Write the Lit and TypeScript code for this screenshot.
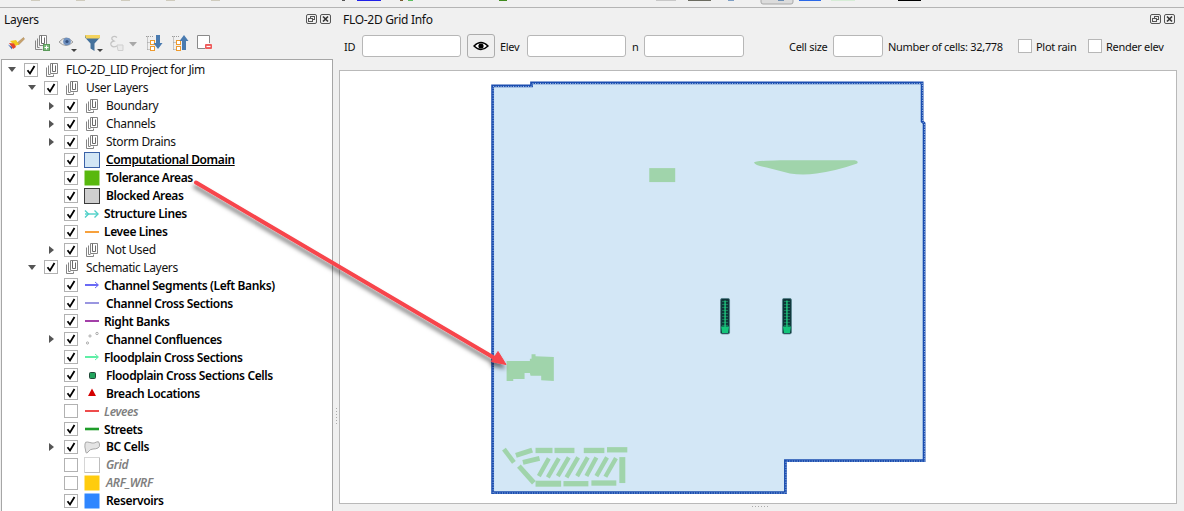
import { LitElement, html, svg, css, nothing } from "lit";
import { customElement } from "lit/decorators.js";

type Row = {
  label: string;
  depth: number;
  icon: string;
  exp?: "open" | "closed";
  off?: boolean;
  style?: "bold" | "link" | "dim";
  tight?: boolean;
};

const ROWS: Row[] = [
  { label: "FLO-2D_LID Project for Jim", depth: 0, icon: "group", exp: "open" },
  { label: "User Layers", depth: 1, icon: "group", exp: "open" },
  { label: "Boundary", depth: 2, icon: "group", exp: "closed" },
  { label: "Channels", depth: 2, icon: "group", exp: "closed" },
  { label: "Storm Drains", depth: 2, icon: "group", exp: "closed" },
  { label: "Computational Domain", depth: 2, icon: "domain", style: "link" },
  { label: "Tolerance Areas", depth: 2, icon: "tolerance", style: "bold" },
  { label: "Blocked Areas", depth: 2, icon: "blocked", style: "bold" },
  { label: "Structure Lines", depth: 2, icon: "structure", style: "bold", tight: true },
  { label: "Levee Lines", depth: 2, icon: "leveeLine", style: "bold", tight: true },
  { label: "Not Used", depth: 2, icon: "group", exp: "closed" },
  { label: "Schematic Layers", depth: 1, icon: "group", exp: "open" },
  { label: "Channel Segments (Left Banks)", depth: 2, icon: "segments", style: "bold", tight: true },
  { label: "Channel Cross Sections", depth: 2, icon: "xsec", style: "bold" },
  { label: "Right Banks", depth: 2, icon: "banks", style: "bold", tight: true },
  { label: "Channel Confluences", depth: 2, icon: "confluence", style: "bold", exp: "closed" },
  { label: "Floodplain Cross Sections", depth: 2, icon: "floodplain", style: "bold", tight: true },
  { label: "Floodplain Cross Sections Cells", depth: 2, icon: "cells", style: "bold" },
  { label: "Breach Locations", depth: 2, icon: "breach", style: "bold" },
  { label: "Levees", depth: 2, icon: "levees", style: "dim", off: true, tight: true },
  { label: "Streets", depth: 2, icon: "streets", style: "bold", tight: true },
  { label: "BC Cells", depth: 2, icon: "bc", style: "bold", exp: "closed" },
  { label: "Grid", depth: 2, icon: "grid", style: "dim", off: true },
  { label: "ARF_WRF", depth: 2, icon: "arf", style: "dim", off: true },
  { label: "Reservoirs", depth: 2, icon: "reservoirs", style: "bold" },
  { label: "", depth: 2, icon: "next" },
];

const line = (color: string, w = 2) =>
  html`<svg width="16" height="16" viewBox="0 0 16 16"><path d="M1 8H15" stroke=${color} stroke-width=${w} /></svg>`;
const arrowLine = (color: string) =>
  html`<svg width="16" height="16" viewBox="0 0 16 16" fill="none" stroke=${color} stroke-width="2"><path d="M1 8H14" /><path d="M11 5l3.5 3-3.5 3" stroke-width="1" /></svg>`;
const swatch = (fill: string, stroke = "none") =>
  html`<svg width="16" height="16" viewBox="0 0 16 16"><rect x=".5" y=".5" width="15" height="15" fill=${fill} stroke=${stroke} /></svg>`;

// the little stacked-documents icon QGIS uses for layer groups
const groupIcon = html`<svg width="16" height="16" viewBox="0 0 16 16" fill="none" stroke="#858585" stroke-width="1">
  <path d="M2.5 5.5V14.5H9.5V12.5" />
  <path d="M4.5 3.5V12.5H6.5" />
  <path d="M6.5 1.5H13.5V11.5H6.5Z" fill="#fff" />
  <path d="M8.5 1.5V9.5H11.5V3.5" stroke="#6a6a6a" />
</svg>`;

const ICONS: Record<string, unknown> = {
  group: groupIcon,
  domain: swatch("#d2e6f5", "#3a62a8"),
  tolerance: swatch("#58b80e"),
  blocked: swatch("#cfcfcf", "#3c3c3c"),
  structure: html`<svg width="16" height="16" viewBox="0 0 16 16" fill="none" stroke="#4fd0c8" stroke-width="1.4"><path d="M1 8H14" /><path d="M1 4.5L4.5 8 1 11.5M10.5 4.5L14 8l-3.5 3.5" /></svg>`,
  leveeLine: line("#f7a13c"),
  segments: arrowLine("#6a6af5"),
  xsec: line("#9a96e0"),
  banks: line("#a33fa8"),
  confluence: html`<svg width="16" height="16" viewBox="0 0 16 16" fill="#fff" stroke="#999" stroke-width=".8"><circle cx="13" cy="2.5" r="1.2" /><circle cx="6" cy="5" r="1.1" /><circle cx="3.5" cy="12" r="1.1" /></svg>`,
  floodplain: arrowLine("#5fefa6"),
  cells: html`<svg width="16" height="16" viewBox="0 0 16 16"><rect x="5.5" y="5.5" width="6" height="6" rx="1" fill="#22a35c" stroke="#24483a" /></svg>`,
  breach: html`<svg width="16" height="16" viewBox="0 0 16 16"><path d="M8 3.5L12 11H4Z" fill="#d40000" /></svg>`,
  levees: line("#ee4c4c"),
  streets: line("#1f9d2a", 2.6),
  bc: html`<svg width="16" height="16" viewBox="0 0 16 16"><path d="M1 5Q1 2.5 3.5 3T8 4T12.5 3T15.5 5Q16 8 14 9T9 10T4 13T1.5 11Q.5 8 1 5Z" fill="#e4e4e4" stroke="#a8a8a8" /></svg>`,
  grid: html`<svg width="16" height="16" viewBox="0 0 16 16"><rect x=".5" y=".5" width="15" height="15" fill="#fff" stroke="#d6d6d6" /><path d="M1 15.5H16M15.5 1V16" stroke="#bdbdbd" /></svg>`,
  arf: swatch("#ffcc0e"),
  reservoirs: swatch("#2f86ff"),
  next: html`<svg width="16" height="16" viewBox="0 0 16 16"><rect x="0" y="0" width="16" height="16" fill="#3aa83a" /></svg>`,
};

const dropdown = svg`<path d="M13 15h6l-3 3z" fill="#444" />`;

const TOOLS = [
  html`<svg width="18" height="18" viewBox="0 0 18 18">
    <path d="M10 9L16.5 3.5L17.5 5L11.5 11Z" fill="#c9a26a" stroke="#9c7a48" stroke-width=".5" />
    <path d="M3 7L9 6L12 10.5L8 12Z" fill="#f2c81e" />
    <path d="M2 9L7 9.5L9 13L6 15Z" fill="#e2452f" />
    <path d="M1 10.5L5 13L5 15.5Z" fill="#3a63b8" />
  </svg>`,
  html`<svg width="18" height="18" viewBox="0 0 18 18" fill="none" stroke="#858585">
    <path d="M2.5 6.5V15.5H9.5" />
    <path d="M4.5 4.5V13.5H6.5" />
    <path d="M6.5 1.5H13.5V11.5H6.5Z" fill="#fff" />
    <path d="M8.5 1.5V9.5H11.5V3.5" stroke="#6a6a6a" />
    <rect x="10.5" y="10.5" width="6" height="6" fill="#7bb87b" stroke="#5a9a5a" />
    <path d="M13.5 11.5v4M11.5 13.5h4" stroke="#fff" />
  </svg>`,
  html`<svg width="20" height="18" viewBox="0 0 20 18">
    <path d="M1 8Q8 0 15 8Q8 15 1 8Z" fill="#e9e9e9" stroke="#9d9d9d" />
    <circle cx="9" cy="7.5" r="3.8" fill="#6d8fbe" />
    <circle cx="9" cy="7.5" r="1.6" fill="#34507c" />
    ${dropdown}
  </svg>`,
  html`<svg width="20" height="18" viewBox="0 0 20 18">
    <path d="M1 1H16V3.5L10.5 9.5V17L6.5 14.5V9.5L1 3.5Z" fill="#44719c" />
    <path d="M1 1H16V3.5L15 4.6H2Z" fill="#f4d35e" />
    ${dropdown}
  </svg>`,
  html`<svg width="29" height="18" viewBox="0 0 29 18">
    <path d="M8 3.5Q5.5 1.5 3.5 3Q1.5 5 5 7Q1 8 2 11Q3.5 14 8 12" fill="none" stroke="#c4c4c4" stroke-width="1.3" />
    <path d="M8 11H14V16.5H9Z" fill="#eaeaea" stroke="#cfcfcf" />
    <path d="M20 8h8l-4 4.5z" fill="#a8a8a8" />
  </svg>`,
  html`<svg width="18" height="18" viewBox="0 0 18 18">
    <path d="M1 2.5H8M2.5 2.5V15.5M2.5 8.5H6M2.5 15.5H6" stroke="#9a9a9a" stroke-dasharray="1 1" fill="none" />
    <rect x="5.5" y="6.5" width="4" height="4" fill="#fff" stroke="#ee9a2e" />
    <rect x="5.5" y="12.5" width="4" height="4" fill="#fff" stroke="#ee9a2e" />
    <path d="M11 1H15V9H17.5L13 15L8.5 9H11Z" fill="#4a7bb0" />
  </svg>`,
  html`<svg width="18" height="18" viewBox="0 0 18 18">
    <path d="M1 2.5H8M2.5 2.5V15.5M2.5 8.5H6M2.5 15.5H6" stroke="#9a9a9a" stroke-dasharray="1 1" fill="none" />
    <rect x="5.5" y="6.5" width="4" height="4" fill="#fff" stroke="#ee9a2e" />
    <rect x="5.5" y="12.5" width="4" height="4" fill="#fff" stroke="#ee9a2e" />
    <path d="M11 16V7H8.5L13 1L17.5 7H15V16Z" fill="#4a7bb0" />
  </svg>`,
  html`<svg width="18" height="18" viewBox="0 0 18 18">
    <path d="M9 14.5H1.5V1.5H13.5V9" fill="#fff" stroke="#8a8a8a" />
    <rect x="9" y="10" width="7" height="5" rx="1" fill="#ee5a5a" />
    <path d="M10.5 12.5h4" stroke="#fff" stroke-width="1.2" />
  </svg>`,
];

const dockButtons = html`<div class="dock-btns">
  <svg width="11" height="10" viewBox="0 0 11 10" fill="none" stroke="#555">
    <rect x=".5" y=".5" width="10" height="9" rx="1.5" />
    <rect x="4.5" y="2.5" width="4" height="3" />
    <rect x="2.5" y="4.5" width="4" height="3" fill="#f0f0f0" />
  </svg>
  <svg width="11" height="10" viewBox="0 0 11 10" fill="none">
    <rect x=".5" y=".5" width="10" height="9" rx="1.5" stroke="#555" />
    <path d="M3 2.5L8 7.5M8 2.5L3 7.5" stroke="#333" stroke-width="1.6" />
  </svg>
</div>`;

// map shapes are written in 3x crop coordinates, the group transform brings them back
const LOWER_BLOCKS: [number, number, number, number, number][] = [
  [70, 327, 100, 367, 14], [106, 346, 155, 330, 15], [127, 367, 177, 355, 15], [115, 378, 160, 428, 15],
  [165, 331, 216, 331, 16], [222, 331, 282, 331, 16], [310, 331, 372, 331, 16], [380, 329, 441, 329, 16],
  [426, 351, 426, 429, 18], [165, 431, 242, 431, 18], [249, 431, 324, 431, 16], [333, 429, 408, 429, 16],
  [205, 355, 175, 408, 13], [235, 355, 202, 412, 13], [265, 352, 232, 408, 13], [293, 352, 258, 412, 13],
  [322, 352, 290, 408, 13], [348, 352, 318, 408, 13], [380, 352, 348, 408, 13], [407, 354, 375, 410, 13],
];

const gate = (x: number) => svg`
  <rect x=${x} y="298" width="9" height="35.5" rx="1.5" fill="#0f3438" stroke="#4f7f86" stroke-width=".8" />
  <path d="M${x + 1.5} 301H${x + 7.5}M${x + 1.5} 304H${x + 7.5}M${x + 1.5} 307H${x + 7.5}M${x + 1.5} 310H${x + 7.5}M${x + 1.5} 313H${x + 7.5}M${x + 1.5} 316H${x + 7.5}M${x + 1.5} 319H${x + 7.5}M${x + 1.5} 322H${x + 7.5}M${x + 1.5} 325H${x + 7.5}" stroke="#1d8f66" stroke-width=".8" />
  <path d="M${x + 4.5} 300V328" stroke="#1fd080" stroke-width="1.3" />
  <path d="M${x + 0.5} 326H${x + 8.5}L${x + 7.5} 332.5H${x + 1.5}Z" fill="#14c47a" />
`;

@customElement("app-root")
export class AppRoot extends LitElement {
  private _renderRow(r: Row) {
    return html`
      <div class="row" style="padding-left: ${2 + r.depth * 20}px">
        <span class="exp">
          ${r.exp === "open"
            ? html`<svg width="8" height="5" viewBox="0 0 8 5"><path d="M0 0H8L4 5Z" fill="#555" /></svg>`
            : r.exp === "closed"
            ? html`<svg class="closed" width="5" height="8" viewBox="0 0 5 8"><path d="M0 0V8L5 4Z" fill="#555" /></svg>`
            : nothing}
        </span>
        <span class="cb">
          ${r.off
            ? nothing
            : html`<svg width="12" height="12" viewBox="0 0 12 12"><path d="M2.5 6.2L5 9.5L9.5 2" fill="none" stroke="#000" stroke-width="1.8" /></svg>`}
        </span>
        <span class="ico">${ICONS[r.icon]}</span>
        <span class="lbl ${r.style ?? ""} ${r.tight ? "tight" : ""}">${r.label}</span>
      </div>
    `;
  }

  render() {
    return html`
      <svg class="strip" width="1184" height="7" viewBox="0 0 1184 7">
        ${[31, 76, 121, 166, 211].map((x) => svg`<rect x=${x} y="0" width="9" height="1" fill="#cfcbbd" />`)}
        <rect x="342" y="0" width="3" height="1" fill="#555" />
        <rect x="357" y="0" width="24" height="1" fill="#2020e8" />
        <rect x="400" y="0" width="3" height="1" fill="#7a5a30" />
        <rect x="408" y="0" width="5" height="1" fill="#5cc060" />
        <rect x="499" y="0" width="8" height="1" fill="#3e8a1c" />
        <rect x="656" y="0" width="20" height="1" fill="#c8c8c8" />
        <rect x="688" y="0" width="23" height="1" fill="#6b6b60" />
        <rect x="728" y="0" width="6" height="1" fill="#7f9fc4" />
        <rect x="761" y="-3" width="32" height="7" rx="2" fill="#dcdcdc" stroke="#a8a8a8" />
        <rect x="778" y="0" width="6" height="1" fill="#6f8fb4" />
        <rect x="799" y="0" width="22" height="1" fill="#2a68e8" />
        <rect x="831" y="0" width="24" height="1" fill="#d6ecd6" />
        <rect x="898" y="0" width="23" height="1" fill="#000" />
      </svg>

      <div class="main">
        <section class="layers">
          <header class="title"><span>Layers</span>${dockButtons}</header>
          <div class="tools">${TOOLS.map((t) => html`<span class="tool">${t}</span>`)}</div>
          <div class="tree">${ROWS.map((r) => this._renderRow(r))}</div>
        </section>

        <div class="splitter"><span class="grip-v"></span></div>

        <section class="info">
          <header class="title"><span>FLO-2D Grid Info</span>${dockButtons}</header>
          <div class="bar">
            <label>ID</label>
            <span class="field"></span>
            <button class="eye">
              <svg width="16" height="10" viewBox="0 0 16 10">
                <path d="M1 5Q8 -2 15 5Q8 12 1 5Z" fill="#fff" stroke="#000" stroke-width="1.4" />
                <circle cx="8" cy="5" r="2.6" fill="#000" />
              </svg>
            </button>
            <label class="pl5">Elev</label>
            <span class="field"></span>
            <label class="pl6">n</label>
            <span class="field"></span>
            <label class="pl45">Cell size</label>
            <span class="field"></span>
            <label class="pl5">Number of cells: 32,778</label>
            <span class="check"></span>
            <label>Plot rain</label>
            <span class="check"></span>
            <label>Render elev</label>
          </div>
          <div class="canvas">
            <svg class="map" viewBox="339 70 838 433" preserveAspectRatio="none">
              <path class="domain" d="M492 85H531V82H922.5V120.5L924.5 122.5V460.5H785.5V492.5H492Z" />
              <path class="domain-dots" d="M492 85H531V82H922.5V120.5L924.5 122.5V460.5H785.5V492.5H492Z" />
              <g transform="translate(480 340) scale(.33333)" fill="#a0d4ab">
                <path d="M78 62H148V55H153V42H165V48L220 50V122L182 120V106H150L148 98H132V116H98V122H78Z" />
                ${LOWER_BLOCKS.map(
                  ([x1, y1, x2, y2, w]) =>
                    svg`<line x1=${x1} y1=${y1} x2=${x2} y2=${y2} stroke="#a0d4ab" stroke-width=${w} />`
                )}
              </g>
              <g transform="translate(640 150) scale(.33333)" fill="#a0d4ab">
                <rect x="27" y="52" width="78" height="42" />
                <path d="M342 35Q344 30 420 28H645Q658 30 652 38Q590 60 530 68Q490 74 450 68L380 50Q345 44 342 35Z" />
              </g>
              ${gate(720.5)} ${gate(782.5)}
            </svg>
          </div>
          <div class="grip-h"></div>
        </section>
      </div>

      <svg class="arrow" width="1184" height="511" viewBox="0 0 1184 511">
        <defs>
          <filter id="shadow" x="-10%" y="-10%" width="120%" height="130%">
            <feDropShadow dx="-1" dy="4" stdDeviation="2" flood-color="#000" flood-opacity=".5" />
          </filter>
        </defs>
        <g filter="url(#shadow)" fill="#f7444c" stroke="#f7444c">
          <path d="M196 182.5L497 359.5" stroke-width="4" stroke-linecap="round" fill="none" />
          <path d="M506 364.5L491.5 361.5L498 351.5Z" stroke-width="1" />
        </g>
      </svg>
    `;
  }

  static styles = css`
    :host {
      display: block;
      position: relative;
      width: 100vw;
      height: 100vh;
      overflow: hidden;
      background: #f0f0f0;
      color: #111;
      font: 12px "Noto Sans", "Open Sans", sans-serif;
    }

    .strip {
      display: block;
      border-bottom: 1px solid #b4b4b4;
    }

    .main {
      display: flex;
      height: calc(100% - 8px);
    }

    .layers {
      width: 333px;
      flex: none;
      display: flex;
      flex-direction: column;
      min-height: 0;
    }

    .title {
      height: 22px;
      flex: none;
      display: flex;
      align-items: center;
      justify-content: space-between;
      padding-left: 4px;
      padding-right: 2px;
      letter-spacing: -0.3px;
    }

    .dock-btns {
      display: flex;
      gap: 3px;
    }

    .tools {
      height: 29px;
      box-sizing: border-box;
      flex: none;
      display: flex;
      align-items: flex-start;
      padding: 4px 0 0 7px;
    }

    .tool {
      width: 25.5px;
      display: block;
    }

    .tool:nth-child(5) {
      width: 36px;
    }

    .tool svg {
      display: block;
    }

    .tree {
      flex: 1;
      min-height: 0;
      overflow: hidden;
      margin-left: 1px;
      padding-top: 1px;
      background: #fff;
      border: 1px solid #a6a6a6;
      border-bottom: none;
    }

    .row {
      height: 17.96px;
      display: flex;
      align-items: center;
      white-space: nowrap;
    }

    .exp {
      width: 20px;
      flex: none;
      display: flex;
      align-items: center;
      padding-left: 4px;
      box-sizing: border-box;
    }

    .exp .closed {
      margin-left: 1px;
    }

    .cb {
      width: 14px;
      height: 14px;
      flex: none;
      box-sizing: border-box;
      border: 1px solid #b2b2b2;
      background: #fff;
      display: flex;
      align-items: center;
      justify-content: center;
    }

    .ico {
      width: 16px;
      height: 16px;
      flex: none;
      margin-left: 6px;
    }

    .ico svg {
      display: block;
    }

    .lbl {
      margin-left: 6px;
      letter-spacing: -0.35px;
    }

    .lbl.tight {
      margin-left: 4px;
    }

    .bold,
    .link,
    .dim {
      font-weight: 600;
      color: #000;
      letter-spacing: -0.38px;
    }

    .link {
      text-decoration: underline;
    }

    .lbl.dim {
      font-style: italic;
      color: #808080;
    }

    .splitter {
      width: 6px;
      flex: none;
      box-sizing: border-box;
      padding-top: 400px;
      display: flex;
      justify-content: center;
    }

    .grip-v {
      width: 1px;
      height: 18px;
      background: repeating-linear-gradient(to bottom, #aaa 0 1px, transparent 1px 3px);
    }

    .info {
      flex: 1;
      min-width: 0;
      display: flex;
      flex-direction: column;
      padding-right: 7px;
    }

    .info .title {
      margin-right: -7px;
      padding-right: 9px;
    }

    .bar {
      height: 32px;
      flex: none;
      margin-bottom: 8px;
      padding-left: 5px;
      display: grid;
      grid-template-columns: 18px 99px 34px 32px 99px 18px 100px 89px 50px 135px 18px 52px 18px auto;
      align-items: center;
      font-size: 11px;
      letter-spacing: -0.3px;
    }

    .bar label {
      white-space: nowrap;
    }

    .pl5 {
      padding-left: 5px;
    }

    .pl6 {
      padding-left: 6px;
    }

    .pl45 {
      padding-left: 45px;
    }

    .field {
      height: 22px;
      box-sizing: border-box;
      background: #fff;
      border: 1px solid #b7b7b7;
      border-radius: 3px;
    }

    .eye {
      width: 28px;
      height: 24px;
      justify-self: end;
      padding: 0;
      box-sizing: border-box;
      background: #f0f0f0;
      border: 1px solid #adadad;
      border-radius: 3px;
      display: flex;
      align-items: center;
      justify-content: center;
    }

    .check {
      width: 14px;
      height: 14px;
      box-sizing: border-box;
      background: #fff;
      border: 1px solid #b7b7b7;
    }

    .canvas {
      flex: 1;
      min-height: 0;
      background: #fff;
      border: 1px solid #b9b9b9;
      box-sizing: border-box;
    }

    .map {
      display: block;
      width: 100%;
      height: 100%;
    }

    .domain {
      fill: #d3e7f6;
      stroke: #1a4db0;
      stroke-width: 2.8;
    }

    .domain-dots {
      fill: none;
      stroke: #cfe2f4;
      stroke-width: 0.8;
      stroke-dasharray: 1 1.5;
      transform: translate(0.5px, 0.5px);
    }

    .grip-h {
      height: 7px;
      flex: none;
      background: repeating-linear-gradient(to right, #aaa 0 1px, transparent 1px 3px) 413px 2px / 16px 1px no-repeat;
    }

    .arrow {
      position: absolute;
      inset: 0;
      pointer-events: none;
    }
  `;
}
